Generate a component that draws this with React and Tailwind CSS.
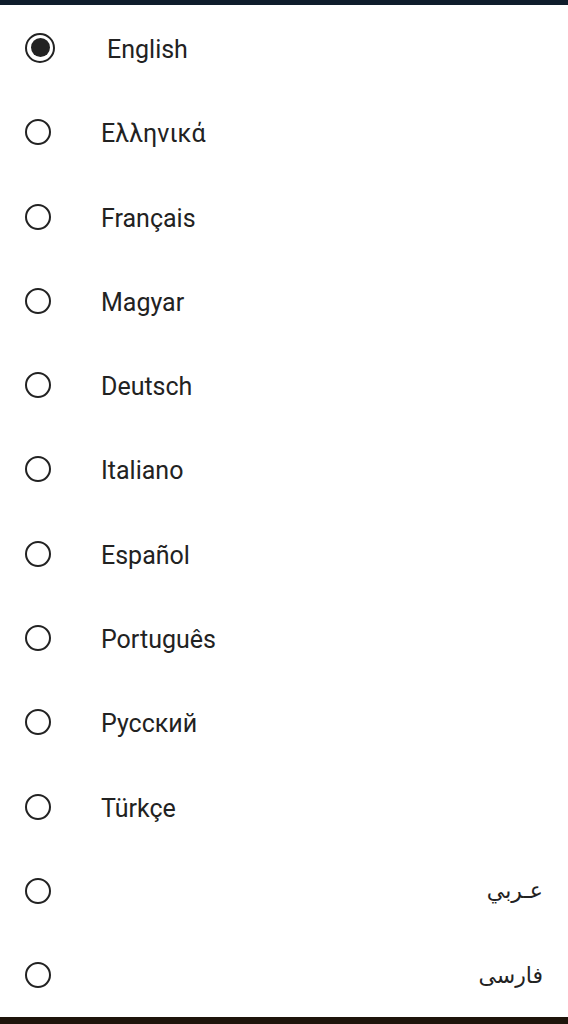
import React, { useState } from "react";

const languages = [
  { code: "en", label: "English" },
  { code: "el", label: "Ελληνικά" },
  { code: "fr", label: "Français" },
  { code: "hu", label: "Magyar" },
  { code: "de", label: "Deutsch" },
  { code: "it", label: "Italiano" },
  { code: "es", label: "Español" },
  { code: "pt", label: "Português" },
  { code: "ru", label: "Русский" },
  { code: "tr", label: "Türkçe" },
  { code: "ar", label: "عـربي", rtl: true },
  { code: "fa", label: "فارسی", rtl: true },
];

function Radio({ checked }) {
  if (checked) {
    return (
      <span className="flex h-[30px] w-[30px] items-center justify-center rounded-full border-[2.5px] border-[#222]">
        <span className="h-[19px] w-[19px] rounded-full bg-[#222]" />
      </span>
    );
  }
  return <span className="h-[26px] w-[26px] rounded-full border-2 border-[#222]" />;
}

export default function App() {
  const [selected, setSelected] = useState("en");

  return (
    <div className="flex h-[1024px] w-[568px] flex-col bg-white font-['Roboto',sans-serif] text-[#222]">
      <div className="h-[5px] bg-[#0f1d2c]" />
      <div className="flex flex-1 flex-col pt-[1px]">
        {languages.map((lang) => (
          <div
            key={lang.code}
            onClick={() => setSelected(lang.code)}
            className="flex h-[84.3px] cursor-pointer items-center pl-[25px] pr-[25px]"
          >
            <div className="flex w-[30px] justify-start">
              <Radio checked={selected === lang.code} />
            </div>
            {lang.rtl ? (
              <span
                dir="rtl"
                className="ml-auto font-['DejaVu_Sans',sans-serif] text-[22px]"
              >
                {lang.label}
              </span>
            ) : (
              <span
                className={
                  selected === lang.code
                    ? "ml-[52px] pt-[3px] text-[25px] leading-none"
                    : "ml-[46px] pt-[3px] text-[25px] leading-none"
                }
              >
                {lang.label}
              </span>
            )}
          </div>
        ))}
      </div>
      <div className="h-[7px] bg-[#1e140b]" />
    </div>
  );
}
